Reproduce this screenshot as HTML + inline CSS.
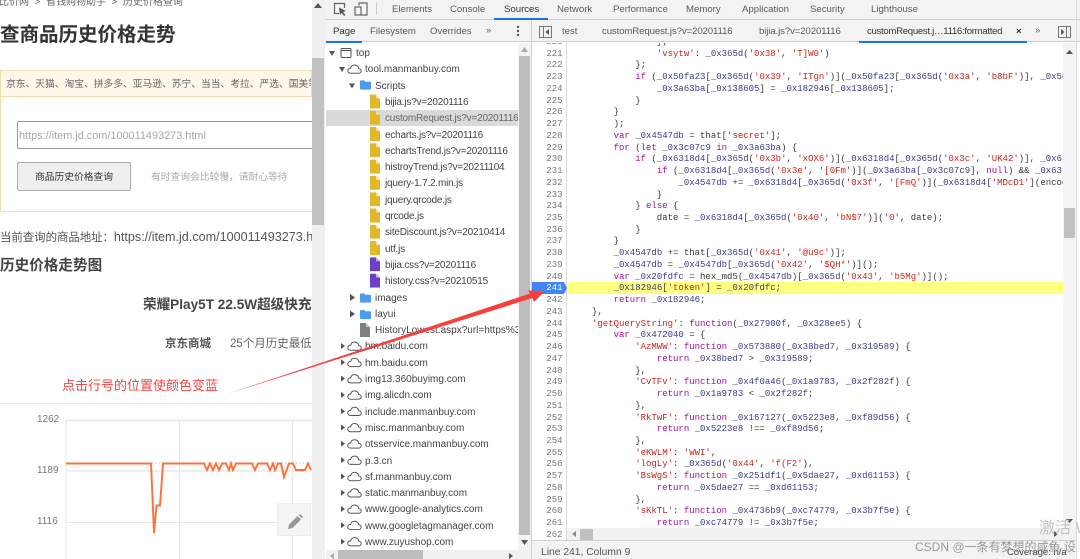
<!DOCTYPE html>
<html><head><meta charset="utf-8">
<style>
html,body{margin:0;padding:0;width:1080px;height:559px;overflow:hidden;background:#fff}
#r{position:relative;width:1080px;height:559px;overflow:hidden;filter:blur(.3px);font-family:"Liberation Sans","Noto Sans CJK SC",sans-serif}
#r div,#r svg,#r pre{position:absolute}
.t{white-space:nowrap}
.tab{position:absolute;white-space:nowrap;font-size:9.6px;color:#5a5a5a;line-height:14px}
.row{height:16px;line-height:16px;font-size:10px;color:#444;white-space:nowrap}
.f{letter-spacing:-.2px}
pre{margin:0;font-family:"Liberation Mono",monospace;font-size:9px;line-height:11.73px;color:#3a3a3a}
i{font-style:normal;color:#a0109a}
b{font-weight:normal;color:#c8261e}
u{text-decoration:none;color:#3b3b8c}
</style></head><body><div id="r">
<svg width="0" height="0" style="left:0;top:0"><defs>
<symbol id="cloud" viewBox="0 0 15 10"><path d="M4 9.3H11.5C13 9.3 14.2 8.3 14.2 6.9S13 4.6 11.8 4.6C11.3 2.4 9.7 1 7.6 1 5.6 1 4.1 2.3 3.7 4.1 2 4.2.8 5.3.8 6.8S2.2 9.3 4 9.3Z" fill="none" stroke="#555" stroke-width="1"/></symbol>
<symbol id="file" viewBox="0 0 10 14"><path d="M0 0H6L10 4V14H0Z" fill="currentColor"/><path d="M6 0V4H10Z" fill="#fff" opacity=".55"/></symbol>
<symbol id="folder" viewBox="0 0 12 10"><path d="M0 1C0 .4.4 0 1 0H4.5L6 1.5H11C11.6 1.5 12 1.9 12 2.5V9C12 9.6 11.6 10 11 10H1C.4 10 0 9.6 0 9Z" fill="#4d9bef"/></symbol>
</defs></svg>

<!-- LEFT PAGE -->
<div class="t" style="left:-1px;top:-4px;font-size:10px;line-height:14px;color:#666">比价网 &nbsp;&gt;&nbsp; 省钱购物助手 &nbsp;&gt;&nbsp; 历史价格查询</div>
<div class="t" style="left:0;top:22px;font-size:19.5px;line-height:26px;font-weight:bold;color:#333">查商品历史价格走势</div>
<div style="left:0;top:70px;width:320px;height:142px;border:1px solid #f3dcb0;box-sizing:border-box"></div>
<div class="t" style="left:0;top:70px;width:312px;height:27px;background:#fff8ea;border:1px solid #f3dcb0;box-sizing:border-box;overflow:hidden;font-size:9.75px;line-height:27px;color:#666;padding-left:5px">京东、天猫、淘宝、拼多多、亚马逊、苏宁、当当、考拉、严选、国美等</div>
<div class="t" style="left:17px;top:121px;width:300px;height:28px;border:1px solid #999;box-sizing:border-box;border-radius:2px;font-size:10.9px;line-height:28px;color:#a8a8a8;padding-left:1px">https://item.jd.com/100011493273.html</div>
<div class="t" style="left:17px;top:162px;width:114px;height:29px;border:1px solid #aaa;box-sizing:border-box;border-radius:2px;background:#efefef;font-size:9.75px;line-height:29px;color:#333;text-align:center">商品历史价格查询</div>
<div class="t" style="left:151px;top:170px;font-size:9.75px;line-height:14px;color:#aaa;padding-top:1px">有时查询会比较慢&#xFF0C;请耐心等待</div>
<div class="t" style="left:0;top:229px;width:312px;overflow:hidden;font-size:11.4px;line-height:16px;color:#555">当前查询的商品地址&#xFF1A;<span style="font-size:12.6px">https://item.jd.com/100011493273.html</span></div>
<div class="t" style="left:0;top:256px;font-size:14.6px;line-height:20px;font-weight:bold;color:#444">历史价格走势图</div>
<div style="left:0;top:296px;width:312px;height:18px;overflow:hidden"><div class="t" style="left:143px;top:0;font-size:13.6px;line-height:18px;font-weight:bold;color:#444">荣耀Play5T 22.5W超级快充</div></div>
<div class="t" style="left:165px;top:336px;font-size:11.5px;line-height:16px;font-weight:bold;color:#555">京东商城</div>
<div style="left:0;top:336px;width:312px;height:16px;overflow:hidden"><div class="t" style="left:230px;top:0;font-size:11.5px;line-height:16px;color:#666">25个月历史最低价</div></div>
<div class="t" style="left:62px;top:377px;font-size:13px;line-height:18px;color:#f54545">点击行号的位置使颜色变蓝</div>
<div style="left:0;top:403px;width:312px;height:1px;background:#e6e6e6"></div>
<div class="t" style="left:37px;top:413px;font-size:10px;line-height:14px;color:#777">1262</div>
<div class="t" style="left:37px;top:464px;font-size:10px;line-height:14px;color:#777">1189</div>
<div class="t" style="left:37px;top:515px;font-size:10px;line-height:14px;color:#777">1116</div>
<svg width="312" height="155" viewBox="0 404 312 155" style="left:0;top:404px">
<g stroke="#e8e8e8" fill="none">
<path d="M66 420.500H312M66 471H312" stroke-width="1.400"/>
<path d="M66 522.500H312M66 420V559M179.500 420V559M292.500 420V559"/>
</g>
<path d="M152 463H312" stroke="#bbb" stroke-dasharray="1.500 2" fill="none"/>
<path d="M66 463.500H151L154 533L156.500 505.500H160L163 463.500H204L207 470L210 463.500L213 470L216 463.500L219 470L222 463.500H226L229 470L231 463.500L233 470L236 463.500H252L255 470L258 463.500H267L270 470L273 463.500L275 470L278 463.500H281L284 477L289 463.500H293L296 470H305L308 463.500L311 470" stroke="#ff7038" stroke-width="1.900" fill="none"/>
</svg>
<div style="left:277px;top:503px;width:34px;height:33px;background:#f5f5f5;border:1px solid #eee;box-sizing:border-box"></div>
<svg width="16" height="16" viewBox="0 0 16 16" style="left:287px;top:514px"><path d="M1 15L2 10.500L10.500 2L14 5.500L5.500 14Z M11.500 1L13 0L16 3L15 4.500Z" fill="#999"/></svg>
<!-- page scrollbar -->
<div style="left:312px;top:0;width:13px;height:559px;background:#f0f0f0"></div>
<div style="left:312px;top:58px;width:12px;height:167px;background:#c1c1c1"></div>
<svg width="8" height="5" viewBox="0 0 8 5" style="left:314px;top:3px"><path d="M4 0L8 5H0Z" fill="#555"/></svg>

<!-- DEVTOOLS -->
<div style="left:325px;top:0;width:755px;height:559px;background:#fff"></div>
<div style="left:325px;top:0;width:755px;height:19px;background:#f3f3f3;border-bottom:1px solid #d0d0d0"></div>
<div style="left:325px;top:20px;width:755px;height:22px;background:#f3f3f3;border-bottom:1px solid #d0d0d0;box-sizing:border-box"></div>
<svg width="14" height="14" viewBox="0 0 14 14" style="left:333px;top:2px"><path d="M6 11.500H1.500V1.500H11.500V6" fill="none" stroke="#666" stroke-width="1.200"/><path d="M6 5.500L13 9L10 10L12.500 13L11 14L9 11L7 13Z" fill="#555"/></svg>
<svg width="14" height="14" viewBox="0 0 14 14" style="left:354px;top:2px"><path d="M5 3.500V1H13V13H7.500" fill="none" stroke="#666" stroke-width="1.200"/><rect x="1" y="5" width="6" height="8" fill="none" stroke="#666" stroke-width="1.200"/></svg>
<div style="left:376px;top:3px;width:1px;height:12px;background:#ccc"></div>
<div class="tab" style="left:392px;top:3px">Elements</div>
<div class="tab" style="left:450px;top:3px">Console</div>
<div class="tab" style="left:504px;top:3px;color:#333">Sources</div>
<div style="left:494px;top:18px;width:54px;height:2px;background:#1a73e8"></div>
<div class="tab" style="left:557px;top:3px">Network</div>
<div class="tab" style="left:613px;top:3px">Performance</div>
<div class="tab" style="left:686px;top:3px">Memory</div>
<div class="tab" style="left:742px;top:3px">Application</div>
<div class="tab" style="left:810px;top:3px">Security</div>
<div class="tab" style="left:871px;top:3px">Lighthouse</div>

<div class="tab" style="left:333px;top:25px;color:#333">Page</div>
<div style="left:326px;top:41px;width:36px;height:2px;background:#1a73e8"></div>
<div class="tab" style="left:370px;top:25px">Filesystem</div>
<div class="tab" style="left:430px;top:25px">Overrides</div>
<div class="tab" style="left:486px;top:24px;color:#666">»</div>
<svg width="4" height="12" viewBox="0 0 4 12" style="left:516px;top:25px"><circle cx="2" cy="2" r="1.200" fill="#555"/><circle cx="2" cy="6" r="1.200" fill="#555"/><circle cx="2" cy="10" r="1.200" fill="#555"/></svg>
<div style="left:531px;top:20px;width:1px;height:539px;background:#d0d0d0"></div>
<svg width="13" height="12" viewBox="0 0 13 12" style="left:539px;top:26px"><rect x=".5" y=".5" width="12" height="11" fill="none" stroke="#777"/><path d="M4.500 0V12" stroke="#777"/><path d="M10 3V9L6.500 6Z" fill="#555"/></svg>
<div class="tab" style="left:562px;top:25px">test</div>
<div class="tab" style="left:602px;top:25px;letter-spacing:-.1px">customRequest.js?v=20201116</div>
<div class="tab" style="left:759px;top:25px;letter-spacing:-.1px">bijia.js?v=20201116</div>
<div class="tab" style="left:867px;top:25px;color:#333;letter-spacing:-.3px;width:135px;overflow:hidden">customRequest.j…1116:formatted</div>
<div class="tab" style="left:1016px;top:25px;color:#333;font-weight:bold">×</div>
<div style="left:859px;top:41px;width:168px;height:2px;background:#1a73e8"></div>
<div class="tab" style="left:1035px;top:24px;color:#666">»</div>
<svg width="13" height="12" viewBox="0 0 13 12" style="left:1058px;top:26px"><rect x=".5" y=".5" width="12" height="11" fill="none" stroke="#777"/><path d="M8.500 0V12" stroke="#777"/><path d="M3 3V9L6.500 6Z" fill="#555"/></svg>
<div style="left:1076px;top:0;width:1px;height:559px;background:#ddd"></div>

<!-- Navigator -->
<div style="left:326px;top:110px;width:192px;height:16px;background:#dadada"></div>
<svg width="192" height="510" viewBox="326 43 192 510" style="left:326px;top:43px">
<g fill="#555">
<path d="M329 51L335 51L332 56Z"/><path d="M339 67L345 67L342 72Z"/><path d="M349 83.500L355 83.500L352 88.500Z"/>
<path d="M350 294L355 297.500L350 301Z"/><path d="M350 310.500L355 314L350 317.500Z"/>
<path d="M341 343L345 346L341 349Z"/><path d="M341 359.300L345 362.300L341 365.300Z"/><path d="M341 375.600L345 378.600L341 381.600Z"/><path d="M341 391.900L345 394.900L341 397.900Z"/><path d="M341 408.200L345 411.200L341 414.200Z"/><path d="M341 424.500L345 427.500L341 430.500Z"/><path d="M341 440.800L345 443.800L341 446.800Z"/><path d="M341 457.100L345 460.100L341 463.100Z"/><path d="M341 473.400L345 476.400L341 479.400Z"/><path d="M341 489.700L345 492.700L341 495.700Z"/><path d="M341 506L345 509L341 512Z"/><path d="M341 522.300L345 525.300L341 528.300Z"/><path d="M341 538.600L345 541.600L341 544.600Z"/>
</g>
<rect x="341" y="48.500" width="10" height="9" rx="1" fill="none" stroke="#555"/><path d="M341 50.500H351" stroke="#555"/>
<use href="#cloud" x="347" y="64" width="15" height="10"/>
<use href="#folder" x="360" y="80" width="11" height="10"/>
<g color="#e0b829">
<use href="#file" x="370" y="94.500" width="10" height="14"/><use href="#file" x="370" y="110.800" width="10" height="14"/><use href="#file" x="370" y="127" width="10" height="14"/><use href="#file" x="370" y="143.300" width="10" height="14"/><use href="#file" x="370" y="159.600" width="10" height="14"/><use href="#file" x="370" y="175.900" width="10" height="14"/><use href="#file" x="370" y="192.200" width="10" height="14"/><use href="#file" x="370" y="208.500" width="10" height="14"/><use href="#file" x="370" y="224.800" width="10" height="14"/><use href="#file" x="370" y="241" width="10" height="14"/>
</g>
<g color="#6b3fc6"><use href="#file" x="370" y="257.300" width="10" height="14"/><use href="#file" x="370" y="273.600" width="10" height="14"/></g>
<use href="#folder" x="360" y="293" width="11" height="10"/><use href="#folder" x="360" y="309.500" width="11" height="10"/>
<g color="#808080"><use href="#file" x="360" y="323" width="10" height="14"/></g>
<use href="#cloud" x="347" y="341" width="15" height="10"/><use href="#cloud" x="347" y="357.300" width="15" height="10"/><use href="#cloud" x="347" y="373.600" width="15" height="10"/><use href="#cloud" x="347" y="389.900" width="15" height="10"/><use href="#cloud" x="347" y="406.200" width="15" height="10"/><use href="#cloud" x="347" y="422.500" width="15" height="10"/><use href="#cloud" x="347" y="438.800" width="15" height="10"/><use href="#cloud" x="347" y="455.100" width="15" height="10"/><use href="#cloud" x="347" y="471.400" width="15" height="10"/><use href="#cloud" x="347" y="487.700" width="15" height="10"/><use href="#cloud" x="347" y="504" width="15" height="10"/><use href="#cloud" x="347" y="520.300" width="15" height="10"/><use href="#cloud" x="347" y="536.600" width="15" height="10"/>
</svg>
<div style="left:326px;top:44px;width:192px;height:507px;overflow:hidden">
<div class="row" style="left:30px;top:2px">top</div>
<div class="row" style="left:39px;top:18.300px">tool.manmanbuy.com</div>
<div class="row" style="left:49px;top:34.600px">Scripts</div>
<div class="row f" style="left:59px;top:50.900px">bijia.js?v=20201116</div>
<div class="row f" style="left:59px;top:67.200px;color:#666">customRequest.js?v=20201116</div>
<div class="row f" style="left:59px;top:83.500px">echarts.js?v=20201116</div>
<div class="row f" style="left:59px;top:99.800px">echartsTrend.js?v=20201116</div>
<div class="row f" style="left:59px;top:116.100px">histroyTrend.js?v=20211104</div>
<div class="row f" style="left:59px;top:132.400px">jquery-1.7.2.min.js</div>
<div class="row f" style="left:59px;top:148.700px">jquery.qrcode.js</div>
<div class="row f" style="left:59px;top:165px">qrcode.js</div>
<div class="row f" style="left:59px;top:181.300px">siteDiscount.js?v=20210414</div>
<div class="row f" style="left:59px;top:197.600px">utf.js</div>
<div class="row f" style="left:59px;top:213.900px">bijia.css?v=20201116</div>
<div class="row f" style="left:59px;top:230.200px">history.css?v=20210515</div>
<div class="row" style="left:49px;top:246.500px">images</div>
<div class="row" style="left:49px;top:262.800px">layui</div>
<div class="row" style="left:49px;top:279.100px">HistoryLowest.aspx?url=https%3A%2F%2F</div>
<div class="row" style="left:39px;top:295.400px">hm.baidu.com</div>
<div class="row" style="left:39px;top:311.700px">hm.baidu.com</div>
<div class="row" style="left:39px;top:328px">img13.360buyimg.com</div>
<div class="row" style="left:39px;top:344.300px">img.alicdn.com</div>
<div class="row" style="left:39px;top:360.600px">include.manmanbuy.com</div>
<div class="row" style="left:39px;top:376.900px">misc.manmanbuy.com</div>
<div class="row" style="left:39px;top:393.200px">otsservice.manmanbuy.com</div>
<div class="row" style="left:39px;top:409.500px">p.3.cn</div>
<div class="row" style="left:39px;top:425.800px">sf.manmanbuy.com</div>
<div class="row" style="left:39px;top:442.100px">static.manmanbuy.com</div>
<div class="row" style="left:39px;top:458.400px">www.google-analytics.com</div>
<div class="row" style="left:39px;top:474.700px">www.googletagmanager.com</div>
<div class="row" style="left:39px;top:491px">www.zuyushop.com</div>
</div>
<!-- nav scrollbars -->
<div style="left:518px;top:43px;width:13px;height:507px;background:#f3f3f3"></div>
<div style="left:519px;top:56px;width:11px;height:479px;background:#bdbdbd"></div>
<svg width="7" height="5" viewBox="0 0 7 5" style="left:521px;top:47px"><path d="M3.500 0L7 5H0Z" fill="#aaa"/></svg>
<svg width="7" height="5" viewBox="0 0 7 5" style="left:521px;top:540px"><path d="M3.500 5L7 0H0Z" fill="#555"/></svg>
<div style="left:326px;top:550px;width:205px;height:9px;background:#f1f1f1"></div>
<div style="left:338px;top:550px;width:85px;height:9px;background:#bdbdbd"></div>
<svg width="4" height="6" viewBox="0 0 4 6" style="left:330px;top:553px"><path d="M0 3L4 0V6Z" fill="#aaa"/></svg>
<svg width="4" height="6" viewBox="0 0 4 6" style="left:509px;top:553px"><path d="M4 3L0 0V6Z" fill="#555"/></svg>

<!-- Editor -->
<div style="left:566px;top:43px;width:1px;height:497px;background:#dcdcdc"></div>
<div style="left:567px;top:282px;width:496px;height:11.700px;background:#ffff80"></div>
<div style="left:532px;top:43px;width:531px;height:497px;overflow:hidden">
<pre style="left:0;top:-6px;width:30.500px;text-align:right;color:#777">220
221
222
223
224
225
226
227
228
229
230
231
232
233
234
235
236
237
238
239
240
<span style="color:transparent">241</span>
242
243
244
245
246
247
248
249
250
251
252
253
254
255
256
257
258
259
260
261
262</pre>
<pre style="left:38.400px;top:-6px">                };
                <b>'vsytw'</b>: <u>_0x365d</u>(<b>'0x38'</b>, <b>'T]W0'</b>)
            };
            <i>if</i> (<u>_0x50fa23</u>[<u>_0x365d</u>(<b>'0x39'</b>, <b>'ITgn'</b>)](<u>_0x50fa23</u>[<u>_0x365d</u>(<b>'0x3a'</b>, <b>'b8bF'</b>)], <u>_0x50fa23</u>
                <u>_0x3a63ba</u>[<u>_0x138605</u>] = <u>_0x182946</u>[<u>_0x138605</u>];
            }
        }
        );
        <i>var</i> <u>_0x4547db</u> = that[<b>'secret'</b>];
        <i>for</i> (<i>let</i> <u>_0x3c07c9</u> <i>in</i> <u>_0x3a63ba</u>) {
            <i>if</i> (<u>_0x6318d4</u>[<u>_0x365d</u>(<b>'0x3b'</b>, <b>'xOX6'</b>)](<u>_0x6318d4</u>[<u>_0x365d</u>(<b>'0x3c'</b>, <b>'UK42'</b>)], <u>_0x6318d4</u>
                <i>if</i> (<u>_0x6318d4</u>[<u>_0x365d</u>(<b>'0x3e'</b>, <b>'[0Fm'</b>)](<u>_0x3a63ba</u>[<u>_0x3c07c9</u>], <i>null</i>) &amp;&amp; <u>_0x6318d4</u>
                    <u>_0x4547db</u> += <u>_0x6318d4</u>[<u>_0x365d</u>(<b>'0x3f'</b>, <b>'[FmQ'</b>)](<u>_0x6318d4</u>[<b>'MDcD1'</b>](encodeURI
                }
            } <i>else</i> {
                date = <u>_0x6318d4</u>[<u>_0x365d</u>(<b>'0x40'</b>, <b>'bN$7'</b>)](<b>'0'</b>, date);
            }
        }
        <u>_0x4547db</u> += that[<u>_0x365d</u>(<b>'0x41'</b>, <b>'@u9c'</b>)];
        <u>_0x4547db</u> = <u>_0x4547db</u>[<u>_0x365d</u>(<b>'0x42'</b>, <b>'$QH*'</b>)]();
        <i>var</i> <u>_0x20fdfc</u> = hex_md5(<u>_0x4547db</u>)[<u>_0x365d</u>(<b>'0x43'</b>, <b>'b5Mg'</b>)]();
        <u>_0x182946</u>[<b>'token'</b>] = <u>_0x20fdfc</u>;
        <i>return</i> <u>_0x182946</u>;
    },
    <b>'getQueryString'</b>: <i>function</i>(<u>_0x27900f</u>, <u>_0x328ee5</u>) {
        <i>var</i> <u>_0x472040</u> = {
            <b>'AzMWW'</b>: <i>function</i> <u>_0x573880</u>(<u>_0x38bed7</u>, <u>_0x319589</u>) {
                <i>return</i> <u>_0x38bed7</u> &gt; <u>_0x319589</u>;
            },
            <b>'CvTFv'</b>: <i>function</i> <u>_0x4f0a46</u>(<u>_0x1a9783</u>, <u>_0x2f282f</u>) {
                <i>return</i> <u>_0x1a9783</u> &lt; <u>_0x2f282f</u>;
            },
            <b>'RkTwF'</b>: <i>function</i> <u>_0x167127</u>(<u>_0x5223e8</u>, <u>_0xf89d56</u>) {
                <i>return</i> <u>_0x5223e8</u> !== <u>_0xf89d56</u>;
            },
            <b>'eKWLM'</b>: <b>'WWI'</b>,
            <b>'logLy'</b>: <u>_0x365d</u>(<b>'0x44'</b>, <b>'f(F2'</b>),
            <b>'BsWgS'</b>: <i>function</i> <u>_0x251df1</u>(<u>_0x5dae27</u>, <u>_0xd61153</u>) {
                <i>return</i> <u>_0x5dae27</u> == <u>_0xd61153</u>;
            },
            <b>'sKkTL'</b>: <i>function</i> <u>_0x4736b9</u>(<u>_0xc74779</u>, <u>_0x3b7f5e</u>) {
                <i>return</i> <u>_0xc74779</u> != <u>_0x3b7f5e</u>;
            },</pre>
</div>
<svg width="36" height="12" viewBox="0 0 36 12" style="left:532px;top:282px"><path d="M0 0H32L35 6L32 12H0Z" fill="#4285f4"/></svg>
<div class="t" style="left:532px;top:282.500px;width:30.500px;text-align:right;font-family:'Liberation Mono',monospace;font-size:9px;line-height:11.700px;color:#fff">241</div>
<!-- editor scrollbars -->
<div style="left:1063px;top:43px;width:13px;height:497px;background:#f3f3f3"></div>
<div style="left:1064px;top:208px;width:11px;height:30px;background:#c1c1c1"></div>
<svg width="7" height="4" viewBox="0 0 7 4" style="left:1066px;top:50px"><path d="M3.500 0L7 4H0Z" fill="#555"/></svg>
<svg width="7" height="4" viewBox="0 0 7 4" style="left:1066px;top:519px"><path d="M3.500 4L7 0H0Z" fill="#555"/></svg>
<div style="left:567px;top:528px;width:496px;height:12px;background:#f1f1f1"></div>
<div style="left:580px;top:529px;width:13px;height:11px;background:#c1c1c1"></div>
<svg width="4" height="6" viewBox="0 0 4 6" style="left:572px;top:531px"><path d="M0 3L4 0V6Z" fill="#888"/></svg>
<svg width="4" height="6" viewBox="0 0 4 6" style="left:1054px;top:531px"><path d="M4 3L0 0V6Z" fill="#555"/></svg>
<div style="left:532px;top:540px;width:544px;height:19px;background:#f3f3f3;border-top:1px solid #d0d0d0;box-sizing:border-box"></div>
<div class="t" style="left:541px;top:546px;font-size:10.3px;line-height:14px;color:#555">Line 241, Column 9</div>
<div class="t" style="left:1007px;top:546px;font-size:9.500px;line-height:13px;color:#444">Coverage: n/a</div>

<!-- Arrow -->
<svg width="330" height="120" viewBox="225 285 330 120" style="left:225px;top:285px"><path d="M227 394L530 293.500L528 290.500L545 291L534 302L532.500 298Z" fill="#f6403f"/></svg>

<!-- Watermarks -->
<div class="t" style="left:1039px;top:518px;font-size:16px;line-height:22px;color:#c4c4c4">激活 W</div>
<div class="t" style="left:915px;top:539px;font-size:12px;line-height:16px;color:#9a9a9a">CSDN @一条有梦想的咸鱼 设</div>
</div></body></html>
